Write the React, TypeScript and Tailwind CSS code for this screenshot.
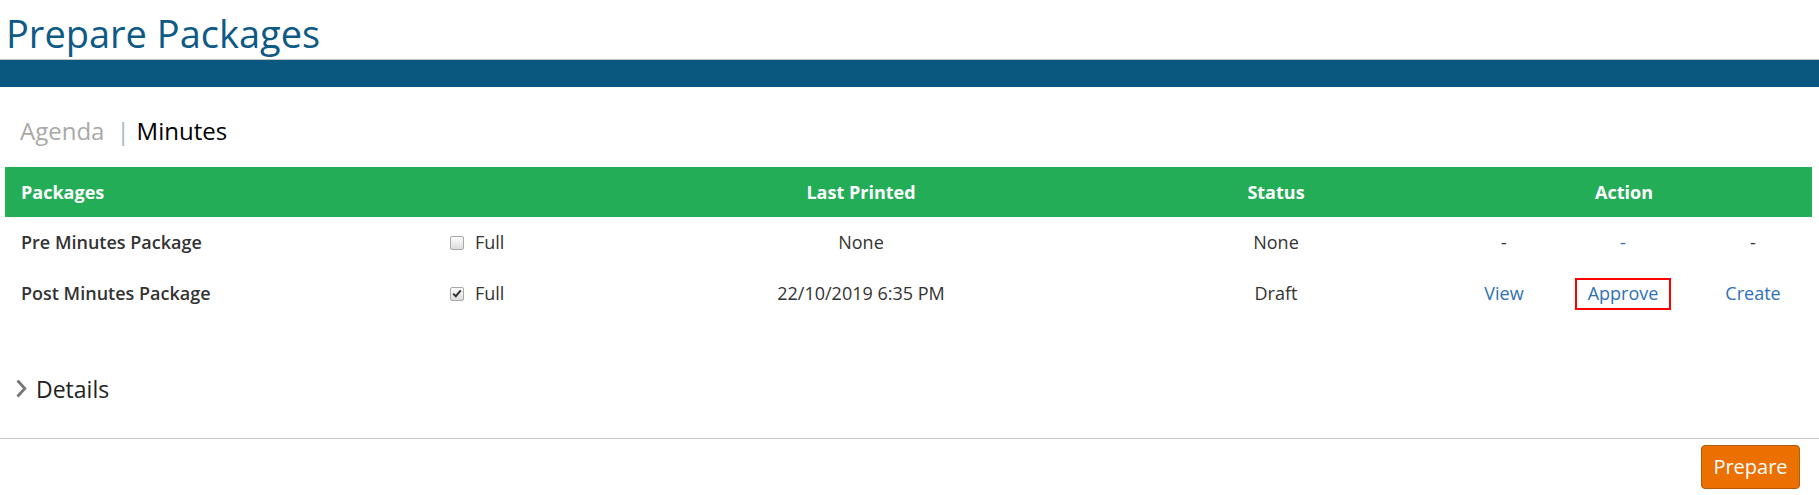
interface PackageRow {
  name: string;
  full: boolean;
  lastPrinted: string;
  status: string;
  actions: { label: string; link: boolean; boxed?: boolean }[];
}

const rows: PackageRow[] = [
  {
    name: 'Pre Minutes Package',
    full: false,
    lastPrinted: 'None',
    status: 'None',
    actions: [
      { label: '-', link: false },
      { label: '-', link: true },
      { label: '-', link: false },
    ],
  },
  {
    name: 'Post Minutes Package',
    full: true,
    lastPrinted: '22/10/2019 6:35 PM',
    status: 'Draft',
    actions: [
      { label: 'View', link: true },
      { label: 'Approve', link: true, boxed: true },
      { label: 'Create', link: true },
    ],
  },
];

function FakeCheckbox({ checked }: { checked: boolean }) {
  return (
    <span className="flex h-[14px] w-[14px] items-center justify-center rounded-[2px] border border-[#a9a9a9] bg-gradient-to-b from-[#fdfdfd] to-[#dcdcdc]">
      {checked && (
        <svg width="10" height="9" viewBox="0 0 10 9">
          <path d="M1.2 4.6 L3.8 7.2 L8.8 1.4" fill="none" stroke="#333" strokeWidth="2" />
        </svg>
      )}
    </span>
  );
}

// column widths: name | full | last printed | status | 3 x action
const grid = 'grid grid-cols-[432px_243px_362px_394px_136px_102px_138px]';

export default function App() {
  return (
    <div className="h-[495px] w-full overflow-hidden bg-white font-['Open_Sans',sans-serif] text-[#333]">
      {/* Title */}
      <div className="h-[60px] border-b border-[#c2c2c2] pl-[6px] pt-[7px]">
        <h1 className="text-[38px] leading-[52px] text-[#0e5a86]">Prepare Packages</h1>
      </div>
      <div className="h-[27px] bg-[#0a5880]" />

      {/* Tabs */}
      <div className="flex items-center pl-[20px] pt-[28px] text-[24px] leading-[32px]">
        <span className="text-[#a9a9a9]">Agenda</span>
        <span className="ml-[12px] mr-[7px] text-[#a4b7c9]">|</span>
        <span className="text-black">Minutes</span>
      </div>

      {/* Table */}
      <div className="mx-[5px] mt-[20px] w-[1807px] text-[18px]">
        <div className={`${grid} h-[50px] items-center bg-[#23ad57] font-bold text-white`}>
          <div className="pl-[16px]">Packages</div>
          <div />
          <div className="text-center">Last Printed</div>
          <div className="pl-[74px] text-center">Status</div>
          <div className="col-span-3 text-center">Action</div>
        </div>
        {rows.map((row) => (
          <div key={row.name} className={`${grid} h-[51px] items-center`}>
            <div className="pl-[16px] font-semibold text-[#333]">{row.name}</div>
            <div className="flex items-center gap-[11px] pl-[13px]">
              <FakeCheckbox checked={row.full} />
              <span>Full</span>
            </div>
            <div className="text-center">{row.lastPrinted}</div>
            <div className="pl-[74px] text-center">{row.status}</div>
            {row.actions.map((a, i) => (
              <div key={i} className={i === 2 ? 'flex justify-center pl-[20px]' : 'flex justify-center'}>
                {a.boxed ? (
                  <span className="flex h-[32px] w-[96px] items-center justify-center border-2 border-[#ff0000] text-[#2f70b7]">
                    {a.label}
                  </span>
                ) : (
                  <span className={a.link ? 'text-[#2f70b7]' : 'text-[#333]'}>{a.label}</span>
                )}
              </div>
            ))}
          </div>
        ))}
      </div>

      {/* Details */}
      <div className="mt-[55px] flex items-center pl-[15px] text-[23px] leading-[31px] text-[#222]">
        <svg width="12" height="19" viewBox="0 0 12 19" className="mt-[-3px]">
          <path d="M2.5 1.5 L9.8 9.5 L2.5 17.5" fill="none" stroke="#777" strokeWidth="2.8" />
        </svg>
        <span className="ml-[9px]">Details</span>
      </div>

      {/* Footer */}
      <div className="mt-[33px] flex justify-end border-t border-[#c8c8c8] pr-[19px] pt-[6px]">
        <button className="h-[44px] w-[99px] rounded-[4px] border border-[#b35a0c] bg-[#ec7000] text-[20px] text-white">
          Prepare
        </button>
      </div>
    </div>
  );
}
